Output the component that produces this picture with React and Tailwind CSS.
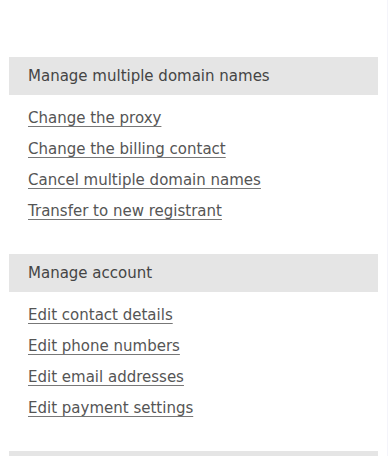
const sections = [
  {
    title: "Manage multiple domain names",
    links: [
      "Change the proxy",
      "Change the billing contact",
      "Cancel multiple domain names",
      "Transfer to new registrant",
    ],
  },
  {
    title: "Manage account",
    links: [
      "Edit contact details",
      "Edit phone numbers",
      "Edit email addresses",
      "Edit payment settings",
    ],
  },
  { title: "", links: [] },
];

const App = () => {
  return (
    <div
      className="w-[388px] h-[456px] overflow-hidden bg-white border-r border-[#f4f4fa] pt-[57px] pl-[9px]"
      style={{ fontFamily: '"DejaVu Sans", Arial, sans-serif' }}
    >
      <div className="w-[369px]">
        {sections.map((s, i) => (
          <section key={i}>
            <h2 className="h-[38px] bg-[#e5e5e5] px-[19px] flex items-center text-[15px] text-[#444]">
              {s.title}
            </h2>
            {s.links.length > 0 && (
              <ul className="pt-[8px] pb-[27px] px-[19px]">
                {s.links.map((l) => (
                  <li key={l} className="h-[31px] flex items-center">
                    <a
                      href="#"
                      className="text-[15px] text-[#555] underline underline-offset-[3px] decoration-[#777]"
                    >
                      {l}
                    </a>
                  </li>
                ))}
              </ul>
            )}
          </section>
        ))}
      </div>
    </div>
  );
};

export default App;
